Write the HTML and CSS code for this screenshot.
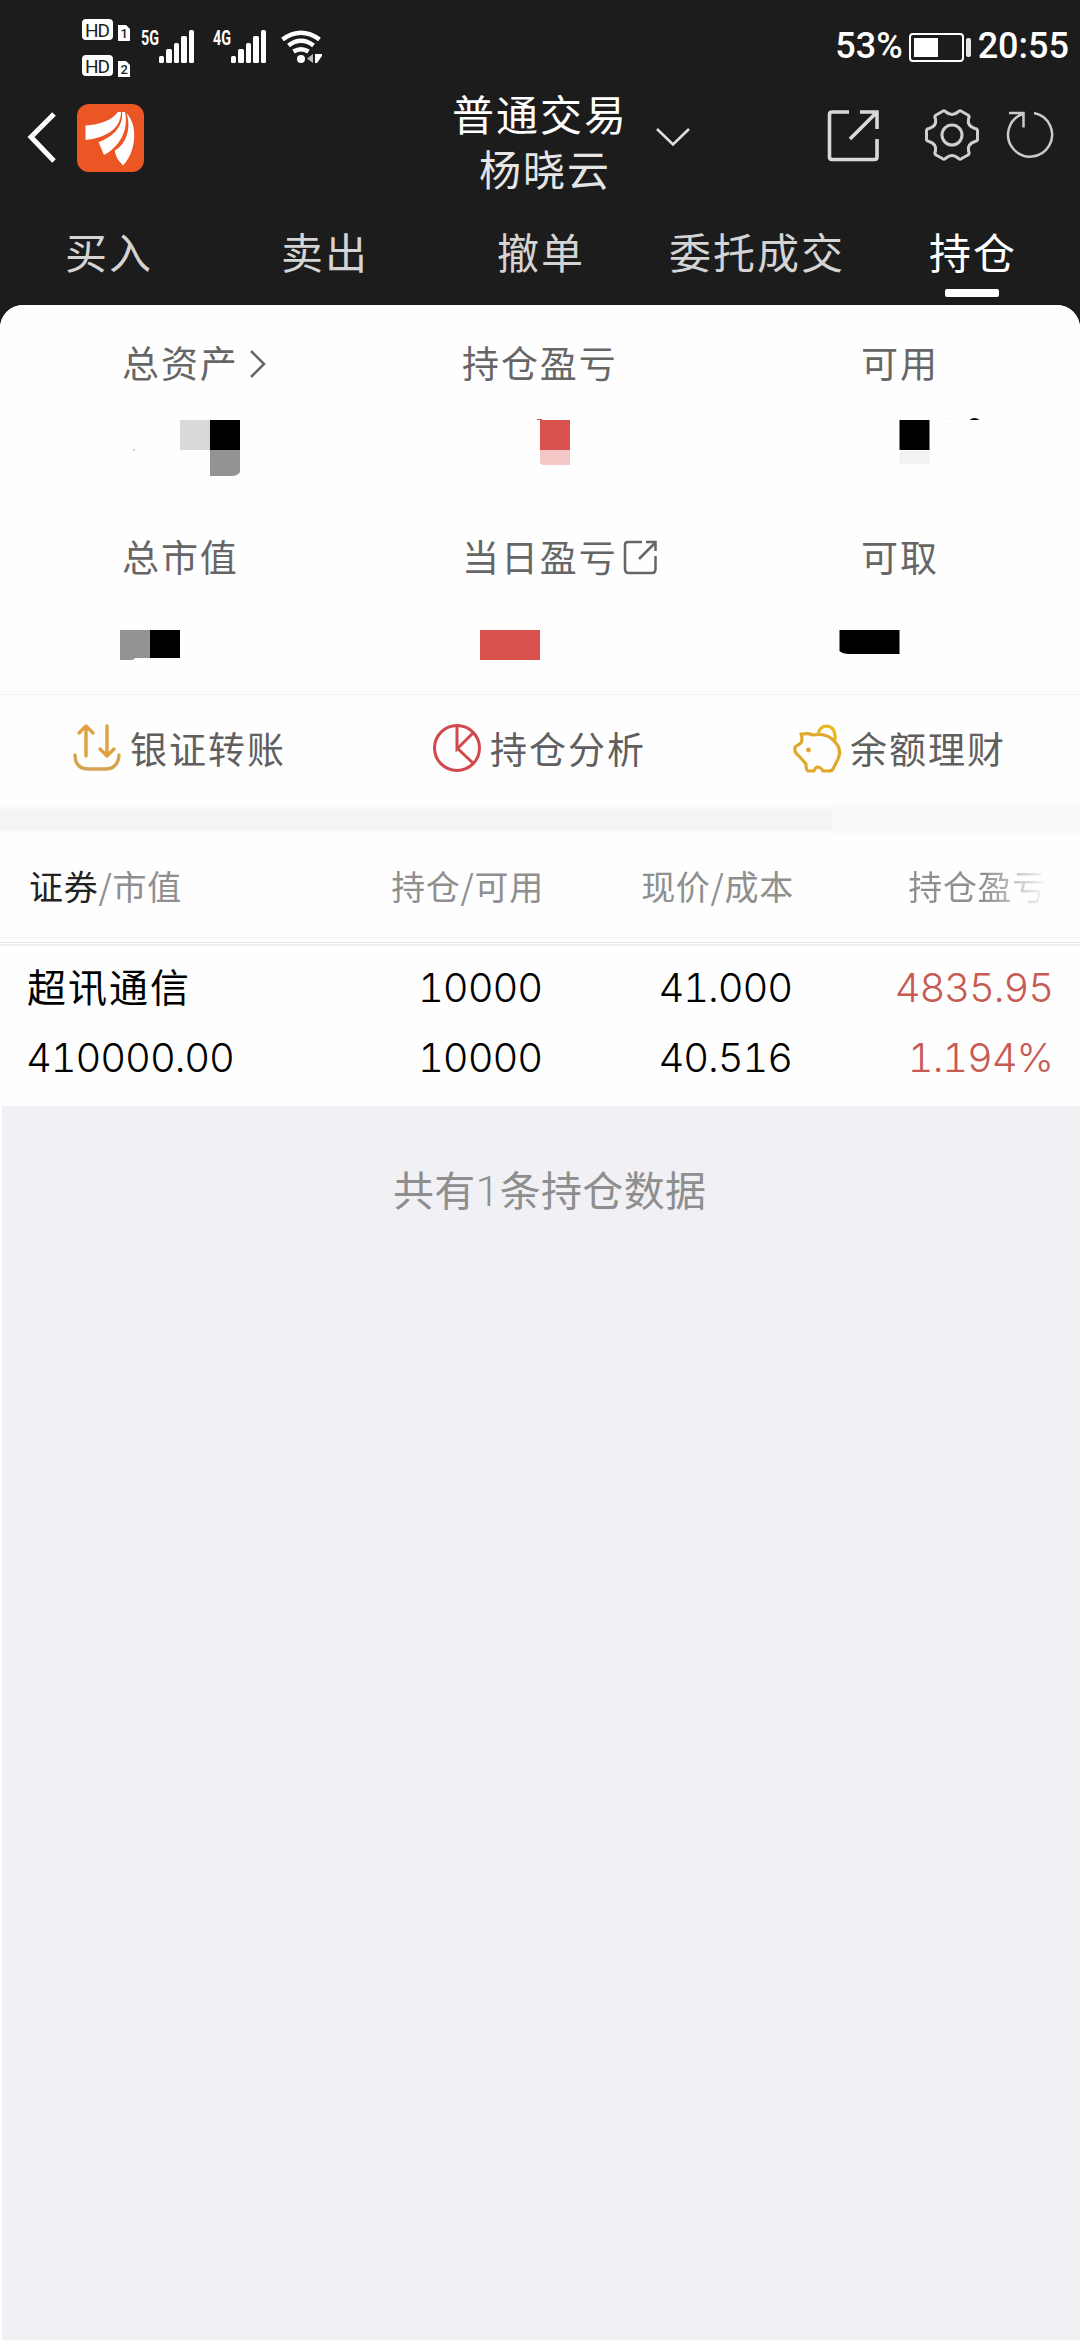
FILE: index.html
```html
<!DOCTYPE html>
<html lang="zh-CN">
<head>
<meta charset="utf-8">
<title>持仓</title>
<link rel="stylesheet" href="styles.css">
</head>
<body>
<div class="status">
  <svg class="signals" width="245" height="80" viewBox="80 0 245 80">
    <g fill="#fff">
      <rect x="82" y="19" width="31" height="21" rx="4"/>
      <rect x="82" y="55" width="31" height="21" rx="4"/>
      <path d="M118 25h8l4 4v12h-12zM118 61h8l4 4v12h-12z"/>
      <rect x="159" y="56" width="5" height="7" rx="1.5"/><rect x="166" y="49" width="6" height="14" rx="1.5"/><rect x="174" y="43" width="5" height="20" rx="1.5"/><rect x="181" y="36" width="6" height="27" rx="1.5"/><rect x="189" y="30" width="5" height="33" rx="1.5"/>
      <rect x="231" y="56" width="5" height="7" rx="1.5"/><rect x="238" y="49" width="6" height="14" rx="1.5"/><rect x="246" y="43" width="5" height="20" rx="1.5"/><rect x="253" y="36" width="6" height="27" rx="1.5"/><rect x="261" y="30" width="5" height="33" rx="1.5"/>
      <circle cx="301" cy="59" r="4"/>
      <path d="M315 54v9h2l5-7v-2z"/>
    </g>
    <path d="M313 54v9l-6-4.500z" fill="#bbb"/>
    <g fill="none" stroke="#fff" stroke-width="4.6"><path d="M282.500 39.500Q301 26 319.500 39.500M288.500 45.500Q301 36 313.500 45.500M293.500 51.500Q301 47 308.500 51.500"/></g>
    <g class="hd"><text x="85" y="36.500" textLength="25">HD</text><text x="85" y="72.500" textLength="25">HD</text></g>
    <g class="sim"><text x="120.500" y="38">1</text><text x="120.500" y="74">2</text></g>
    <g class="net"><text x="141" y="45" textLength="18" lengthAdjust="spacingAndGlyphs">5G</text><text x="213" y="45" textLength="18" lengthAdjust="spacingAndGlyphs">4G</text></g>
  </svg>
  <div class="power">
    <span class="percent">53%</span>
    <svg width="62" height="30" viewBox="0 0 62 30"><rect x="1" y="1" width="53" height="27" rx="3" fill="none" stroke="#fff" stroke-width="2"/><rect x="5" y="5" width="24" height="19" fill="#fff"/><rect x="57" y="5" width="5" height="19" rx="2" fill="#e6e6e6"/></svg>
    <span class="clock">20:55</span>
  </div>
</div>
<header class="header">
  <svg class="back" width="30" height="54" viewBox="0 0 30 54"><path d="M27 4 4 27 27 51" fill="none" stroke="#fff" stroke-width="5"/></svg>
  <svg class="logo" width="67" height="68" viewBox="77 104 67 68"><rect x="77" y="104" width="67" height="68" rx="12" fill="#ec5625"/><g fill="#fff"><path d="M118 112C112 120 100 125 85.500 125.500V140C104 138 121 130 121 112Z"/><path d="M122 112C124 127 111 138 98.500 142L104 155C119 147 129 131 125 112Z"/><path d="M126.500 113C132 130 125 145 115 150.500 115 157 120 162 123 165.500C134 155 140 128 126.500 113Z"/></g></svg>
  <div class="title"><div class="kind">普通交易</div><div class="name">杨晓云</div></div>
  <svg class="down" width="36" height="20" viewBox="0 0 36 20"><path d="m2 2 16 15.500L34 2" fill="none" stroke="#dedede" stroke-width="2.600"/></svg>
  <svg class="export" width="54" height="54" viewBox="0 0 54 54"><path d="M22 3H5Q2.500 3 2.500 5.500V48Q2.500 50.500 5 50.500H47.500Q50 50.500 50 48V30M33 3H50V20M49 4 23 30" fill="none" stroke="#d9d9d9" stroke-width="3.600"/></svg>
  <svg class="gear" width="56" height="54" viewBox="923 108 56 54"><path d="M940.500 112Q943 109.500 945 112 951 117 957 112 959 109.500 961.500 112L967 115Q969 116.500 967.500 119 966 126 974 128.500 977 129 976.500 132V138Q977 141 974 141.500 966 144 967.500 151 969 153.500 967 155L961.500 158Q959 160.500 957 158 951 153 945 158 943 160.500 940.500 158L935 155Q933 153.500 934.500 151 936 144 928 141.500 925 141 925.500 138V132Q925 129 928 128.500 936 126 934.500 119 933 116.500 935 115ZM961 135a10 10 0 1 0-20 0 10 10 0 0 0 20 0" fill="none" stroke="#cfcfcf" stroke-width="3" stroke-linejoin="round"/></svg>
  <svg class="reload" width="50" height="50" viewBox="1004 110 50 50"><path d="M1008 113H1022.500V127.500M1021.500 114A22 22 0 1 0 1033 113" fill="none" stroke="#cacaca" stroke-width="2.500"/></svg>
</header>
<nav class="tabs"><div>买入</div><div>卖出</div><div>撤单</div><div>委托成交</div><div class="on">持仓</div></nav>
<main>
<section class="card">
  <div class="stats">
    <div class="stat"><div class="label l1">总资产<svg width="18" height="30" viewBox="0 0 18 30"><path d="M2 2 15 15 2 28" fill="none" stroke="#666" stroke-width="2.500"/></svg></div><svg class="mosaic" width="360" height="80" viewBox="0 410 360 80"><path fill="#d9d9d9" d="M180 420h30v30h-30z"/><path d="M210 420h30v30h-30z"/><path fill="#939393" d="M210 450h30v22q-2 4-9 4h-21z"/><path fill="#ccc" d="M133 449h2v2h-2z"/></svg></div>
    <div class="stat"><div class="label l2">持仓盈亏</div><svg class="mosaic" width="360" height="80" viewBox="0 410 360 80"><path fill="#d9514c" d="M177 419h5v1h28v30h-30v-30h-3z"/><path fill="#f2c7c6" d="M180 450h30v15h-25q-4 0-5-2z"/></svg></div>
    <div class="stat"><div class="label l3">可用</div><svg class="mosaic" width="360" height="80" viewBox="0 410 360 80"><path d="M179.500 420h30v30h-30zM249.500 420q5-4 10 0z"/><path fill="#f2f2f2" d="M179.500 451h30v13h-30z"/><path fill="#eee" d="M226 418h4v1h2v1z"/></svg></div>
    <div class="stat"><div class="label l1">总市值</div><svg class="mosaic" width="360" height="80" viewBox="0 610 360 80"><path fill="#939393" d="M120 630h30v28h-15q-1 2-5 2h-10z"/><path d="M150 630h30v28h-30z"/></svg></div>
    <div class="stat"><div class="label l2">当日盈亏<svg width="36" height="36" viewBox="0 0 36 36"><path d="M19 2H5Q2 2 2 5V29Q2 33 6 33H29Q32.500 33 32.500 29V16M23 2H32.500V11M32 3 16 19" fill="none" stroke="#666" stroke-width="2.500"/></svg></div><svg class="mosaic" width="360" height="80" viewBox="0 610 360 80"><path fill="#d9514c" d="M120 630h60v30h-60z"/></svg></div>
    <div class="stat"><div class="label l3">可取</div><svg class="mosaic" width="360" height="80" viewBox="0 610 360 80"><path d="M119.500 630h60v24h-50q-7 0-10-3z"/></svg></div>
  </div>
  <div class="actions">
    <div class="action"><svg width="50" height="50" viewBox="0 0 50 50"><g fill="none" stroke="#dfa243" stroke-width="3.400" stroke-linecap="round" stroke-linejoin="round"><path d="M14 33V4M7 10l7-7 7 7M35 3V33M28 26l7 7 7-7"/><path stroke="#d6a352" d="M3 32Q3 46 17 46H33Q46 46 47 32"/></g></svg><span>银证转账</span></div>
    <div class="action"><svg width="50" height="50" viewBox="0 0 50 50"><g fill="none" stroke="#d2484c" stroke-width="3"><circle cx="25" cy="25" r="22.500"/><path d="M25 3V26L41 10M25 25 41 40"/></g></svg><span>持仓分析</span></div>
    <div class="action"><svg width="50" height="50" viewBox="0 0 50 50"><g fill="none" stroke="#dfa72c" stroke-width="3.200" stroke-linejoin="round"><path d="M11 11Q16 10 21 12 33 10 40 16 51 25 46 36L41 46Q40 48 36 48H31Q29 44 25 44 23 45 22 48H16Q14 47 14 41L7 33Q2 30 3 24L9 20Q11 16 9 11Z"/><path stroke="#e8b820" d="M26 11Q28 3 35 3 44 4 43 17"/></g><circle cx="16.500" cy="27" r="2.400" fill="#dfa72c"/></svg><span>余额理财</span></div>
  </div>
</section>
<div class="band"><i></i></div>
<section class="holdings">
  <div class="row head"><div><b>证券</b>/市值</div><div>持仓/可用</div><div>现价/成本</div><div class="fade">持仓盈亏</div></div>
  <div class="rules"></div>
  <div class="row first"><div class="stock">超讯通信</div><div>10000</div><div>41.000</div><div class="up">4835.95</div></div>
  <div class="row second"><div>410000.00</div><div>10000</div><div>40.516</div><div class="up">1.194%</div></div>
</section>
<div class="rest">共有<span>1</span>条持仓数据</div>
</main>
</body>
</html>
```
FILE: styles.css
```css
* { box-sizing: border-box; }
body { margin: 0; width: 1080px; height: 2340px; overflow: hidden; display: flex; flex-direction: column; background: #1d1c1c; font-family: "Noto Sans CJK SC", sans-serif; }
svg { display: block; flex: none; }

.status { height: 88px; display: flex; justify-content: space-between; padding-left: 80px; padding-right: 11px; font-family: Roboto, sans-serif; color: #fff; }
.hd { font: 400 19px Roboto, sans-serif; fill: #1d1c1c; }
.sim { font: 500 13px Roboto, sans-serif; fill: #1d1c1c; }
.net { font: 700 20px Roboto, sans-serif; fill: #fff; }
.power { display: flex; align-items: center; height: 92px; font-size: 36px; font-weight: 500; }
.power svg { margin: 3px 7px 0 6px; }

.header { height: 110px; display: flex; align-items: flex-start; }
.back { margin: 22px 0 0 27px; }
.logo { margin: 16px 0 0 20px; }
.title { width: 180px; margin: -3px 0 0 306px; font-size: 42px; line-height: 55px; letter-spacing: 2px; color: #fff; }
.title .name { padding-left: 29px; color: #e6e6e6; }
.kind { padding-left: 2px; }
.down { margin: 39px 0 0 25px; }
.export { margin: 21px 0 0 136px; }
.gear { margin: 20px 0 0 43px; }
.reload { margin: 22px 0 0 25px; }

.tabs { height: 107px; display: grid; grid-template-columns: repeat(5, 1fr); padding-top: 26px; font-size: 42px; line-height: 54px; letter-spacing: 2px; text-indent: 2px; text-align: center; color: #d4d4d4; }
.tabs .on { color: #fff; }
.tabs .on::after { content: ""; display: block; width: 54px; height: 8px; margin: 11px auto 0; border-radius: 2px; background: #fff; }

main { flex: 1; display: flex; flex-direction: column; background: #fff; border-radius: 23px 23px 0 0; }
.card { height: 499px; background: #fefefe; border-radius: 23px 23px 0 0; }
.stats { height: 386px; padding-top: 30px; display: grid; grid-template-columns: repeat(3, 360px); grid-template-rows: 194px 160px; }
.label { height: 54px; line-height: 54px; display: flex; align-items: center; font-size: 37px; letter-spacing: 1.900px; color: #666; }
.l1 { padding-left: 122px; }
.l2 { padding-left: 102px; }
.l3 { padding-left: 141px; }
.l1 svg { margin: 3px 0 0 10px; }
.l2 svg { margin: 4px 0 0 5px; }
.mosaic { margin-top: 21px; }
.stat:nth-child(n+4) .mosaic { margin-top: 27px; }
.actions { height: 113px; display: grid; grid-template-columns: repeat(3, 360px); border-top: 1px solid #f3f3f3; box-shadow: inset 0 2px #fefefe, inset 0 3px #efefef; }
.action { display: flex; padding: 31px 0 0 72px; font-size: 37px; letter-spacing: 2px; line-height: 54px; color: #5f5f5f; }
.action span { margin: -2px 0 0 8px; }

.band { height: 29px; background: linear-gradient(#fdfdfd, #f4f4f4 8px, #f4f4f4 24px, #fdfdfd); display: flex; justify-content: flex-end; }
.band i { width: 248px; background: #f9f9f9; }

.holdings { height: 273px; background: #fefefe; }
.row { display: grid; grid-template-columns: 242px 273px 250px 261px; padding-left: 27px; }
.row > div { text-align: right; white-space: nowrap; }
.row > div:first-child { text-align: left; }
.head { height: 104px; padding-top: 26px; font-size: 34px; line-height: 54px; letter-spacing: 0.700px; color: #8f8f8f; padding-left: 29px; }
.head b { font-weight: 400; color: #222; }
.head .fade { padding-right: 8px; color: transparent; background: linear-gradient(90deg, #8f8f8f 190px, #f6f6f6 250px); background-clip: text; }
.rules { height: 9px; border-top: 1px solid #f4f4f4; border-bottom: 2px solid #f0f0f5; padding-top: 4px; }
.rules::before { content: ""; display: block; height: 1px; background: #e9e9ec; }
.first, .second { font-family: Inter, "Noto Sans CJK SC", sans-serif; font-weight: 350; font-size: 40px; letter-spacing: -1.100px; font-variant-numeric: tabular-nums; color: #000; }
.first { height: 78px; padding-top: 15px; line-height: 54px; }
.second { line-height: 54px; padding-top: 7px; }
.second > div:first-child { margin-left: -1px; }
.stock { font-size: 39px; letter-spacing: 2px; font-weight: 400; }
.up { color: #c85a54; }

.rest { flex: 1; margin-left: 2px; padding: 54px 0 0 391px; background: #f1f0f5; color: #8e8e8e; font-size: 41px; line-height: 56px; letter-spacing: 0.300px; }
.rest span { font-family: Roboto, sans-serif; font-size: 43px; font-weight: 300; }
```
